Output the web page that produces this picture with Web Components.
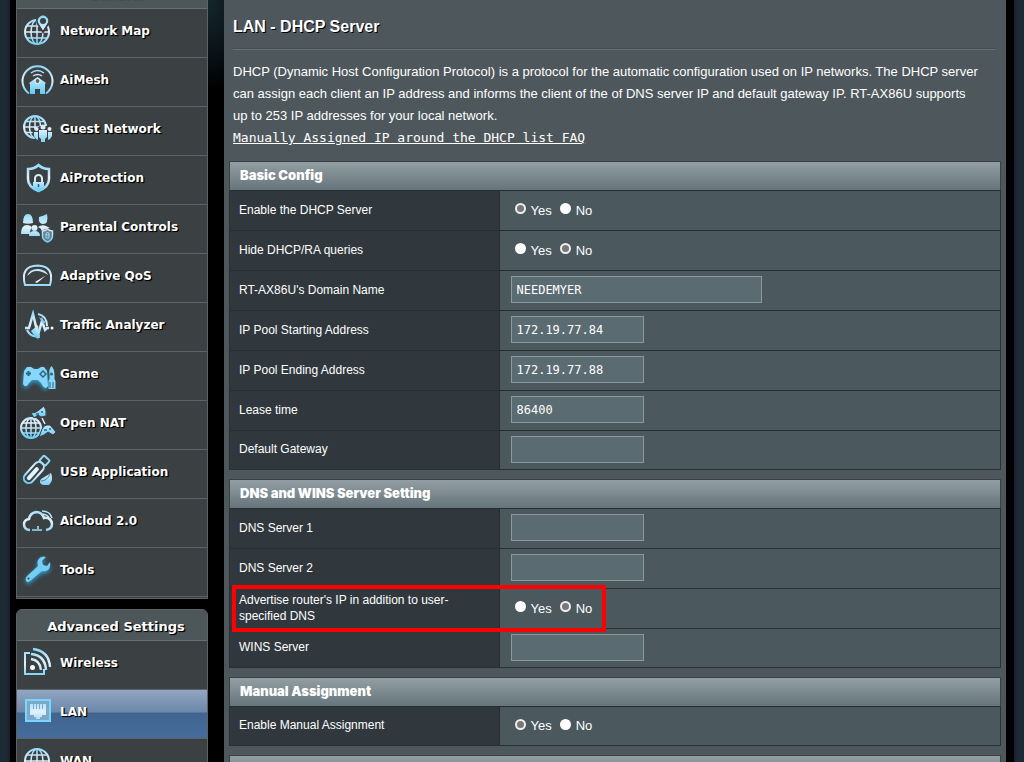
<!DOCTYPE html>
<html lang="en">
<head>
<meta charset="utf-8">
<title>LAN - DHCP Server</title>
<style>
html, body { margin: 0; height: 100%; overflow: hidden; }
body { background: #1d2a35; font-family: "Liberation Sans", Arial, sans-serif; color: #fff; }
</style>
</head>
<body>
<router-shell>
  <side-nav slot="nav">
    <nav-group heading="General">
      <nav-item icon="map">Network Map</nav-item>
      <nav-item icon="mesh">AiMesh</nav-item>
      <nav-item icon="guest">Guest Network</nav-item>
      <nav-item icon="shield">AiProtection</nav-item>
      <nav-item icon="parental">Parental Controls</nav-item>
      <nav-item icon="qos">Adaptive QoS</nav-item>
      <nav-item icon="traffic">Traffic Analyzer</nav-item>
      <nav-item icon="game">Game</nav-item>
      <nav-item icon="nat">Open NAT</nav-item>
      <nav-item icon="usb">USB Application</nav-item>
      <nav-item icon="cloud">AiCloud 2.0</nav-item>
      <nav-item icon="tools">Tools</nav-item>
    </nav-group>
    <nav-group heading="Advanced Settings">
      <nav-item icon="wireless">Wireless</nav-item>
      <nav-item icon="lan" active>LAN</nav-item>
      <nav-item icon="wan">WAN</nav-item>
    </nav-group>
  </side-nav>
  <page-intro heading="LAN - DHCP Server">
    DHCP (Dynamic Host Configuration Protocol) is a protocol for the automatic configuration used on IP networks. The DHCP server can assign each client an IP address and informs the client of the of DNS server IP and default gateway IP. RT-AX86U supports up to 253 IP addresses for your local network.
  </page-intro>
  <config-section data-key="basic"></config-section>
  <config-section data-key="dns"></config-section>
  <config-section data-key="manual"></config-section>
  <config-section data-key="list"></config-section>
</router-shell>

<script>
const attach = (el, html) => { el.attachShadow({ mode: "open" }).innerHTML = html; };

const SECTIONS = {
  basic: { title: "Basic Config", rows: [
    { label: "Enable the DHCP Server", radio: "Yes" },
    { label: "Hide DHCP/RA queries", radio: "No" },
    { label: "RT-AX86U's Domain Name", value: "NEEDEMYER", wide: true },
    { label: "IP Pool Starting Address", value: "172.19.77.84" },
    { label: "IP Pool Ending Address", value: "172.19.77.88" },
    { label: "Lease time", value: "86400" },
    { label: "Default Gateway", value: "" } ] },
  dns: { title: "DNS and WINS Server Setting", rows: [
    { label: "DNS Server 1", value: "" },
    { label: "DNS Server 2", value: "" },
    { label: "Advertise router's IP in addition to user-specified DNS", radio: "No", marked: true },
    { label: "WINS Server", value: "" } ] },
  manual: { title: "Manual Assignment", rows: [
    { label: "Enable Manual Assignment", radio: "Yes" } ] },
  list: { title: "", rows: [] }
};

const globe = (x, y, r) => {
  const h = r * 0.5, w = r * 0.87;
  return `<g stroke-width="1.5"><circle cx="${x}" cy="${y}" r="${r}" stroke-width="2"/>
  <ellipse cx="${x}" cy="${y}" rx="${h}" ry="${r}"/>
  <path d="M${x} ${y - r}V${y + r}M${x - r} ${y}H${x + r}M${x - w} ${y - h}H${x + w}M${x - w} ${y + h}H${x + w}"/></g>`;
};

const BG = "#3b4042";
const ICONS = {
  map: globe(18, 19, 12) + `<path d="M24 19L19 11a6 6 0 1 1 10 0z" fill="url(#g)" stroke="${BG}" stroke-width="2"/><path d="M24 17l-4-6a5 5 0 1 1 8 0z" fill="url(#g)" stroke="none"/><circle cx="24" cy="8" r="3" fill="${BG}" stroke="none"/>`,
  mesh: `<path d="M10 31.500a15 15 0 1 1 17 0" stroke-width="2"/><path d="M11 32V22l-1-1 8.500-6 8.500 6-1 1v10h-5v-5h-5v5z" fill="url(#b)" stroke="none"/><circle cx="18.500" cy="19" r="2.500" fill="#56636a" stroke="#fff" stroke-width="1"/><path d="M12 11q6.500-5 13 0M14 14q4.500-3 9 0" stroke-width="1.500"/>`,
  guest: globe(16, 16, 11) + `<path d="M13 20l8-5h8l6 3v12H17z" fill="${BG}" stroke="none"/><g fill="url(#g)" stroke="none"><circle cx="17.500" cy="18" r="2"/><path d="M15 21h4v8l-2-1-2-3z"/><circle cx="30.500" cy="18" r="2"/><path d="M29 21h4v4l-2 3-2 1z"/><circle cx="24" cy="16" r="2.500"/><path d="M20 19h8v7l-2 2v3h-4v-3l-2-2z"/></g>`,
  shield: `<path d="M19.500 5q4 4 10.500 4v10q0 8-10.500 12Q9 27 9 19V9q6.500 0 10.500-4z" stroke-width="2.500"/><path d="M16 22v-3.500a3.500 3.500 0 0 1 7 0V22"/><path d="M14 22h11v6l-5.500 2.500L14 28z" fill="url(#b)" stroke="none"/><path d="M19.500 24v3" stroke="#456" stroke-width="1.500"/>`,
  parental: `<g fill="url(#g)" stroke="none"><path d="M4 14q0-9 5-9t5 9q-5 1.500-10 0z"/><path d="M2 25q0-9 6-9 4 0 5 3-2 1-2 6z"/><path d="M20 8q4-1 8-3 2 10-4 10-5 0-4-7z"/><path d="M19 18q4-3 8-1l4 2q-6 1-8 3-1-3-4-4z"/><circle cx="15.500" cy="19" r="3"/><path d="M10 27q0-5 5.500-5t5.500 5z"/></g><path d="M28.500 20q2 2 5 2v5q0 4-5 6-5-2-5-6v-5q3 0 5-2z" fill="#64808c" stroke-width="1.500"/><path d="M27 26v-1a1.500 1.500 0 0 1 3 0v1M27 26h3v3h-3z" stroke-width="1"/>`,
  qos: `<path d="M6 27q-5-19 12.500-19.500Q36 8 31 27z" stroke-width="2"/><path d="M8 18q3-8 12-7 7 1 9 6-9-6-16-3z" fill="url(#g)" stroke="none"/><path d="M16 24l11-6.500-9 7.500z" fill="#fff" stroke="none"/>`,
  traffic: `<path d="M19 7q9 2 9 12M8 23q4 8 13 6" stroke-width="2"/><path d="M12 24l5 7h4l-2-13z" fill="url(#b)" stroke="none"/><path d="M6 21h4L14 7l5 21 4-14 3 9 2-2h2" stroke-width="2.500"/><path d="M20 10l7 5-3 2z" fill="#7cd0f2" stroke="none"/><circle cx="33" cy="21" r="1.500" fill="#fff" stroke="none"/>`,
  game: `<path d="M8 11h4l3 2h4l3-2h3l3 4 1 15q-3 5-7-3l-3-3h-6l-3 3q-3 6-6 1l1-13z" fill="#85d8fb" stroke="none" class="glow"/><path d="M9.500 15v5M7 17.500h5" stroke="#35617e"/><path d="M24 15l3 3-3 3-3-3z" stroke="#35617e" stroke-width="1.500"/><path d="M32.500 10q3 3 3 9v4l1 2v8h-7v-8l1-2v-4q-1-6 2-9z" fill="#85d8fb" stroke="none"/><circle cx="32.500" cy="18" r="1.500" fill="#35617e" stroke="none"/><path d="M31 26v6M34 26v6" stroke="#35617e" stroke-width="1"/>`,
  nat: globe(12, 23, 10) + `<g fill="url(#b)" stroke="${BG}" stroke-width="1"><path d="M12 8q5 0 8-3l5-4q3 5 2 10l-5 1-3-2-4 3z"/><path d="M20 32l3-8q2-4 5-4h3l6 7-3 3-5-3-4 3z"/></g><path d="M23 13l3 6" stroke-width="1.500"/><path d="M17 9h3M22 7h2M25 25h3M30 24h2" stroke="#35617e" stroke-width="1.500"/>`,
  usb: `<g transform="rotate(42 18 18)"><rect x="11" y="8" width="10" height="25" rx="5"/><rect x="14" y="14" width="4" height="16" rx="2" fill="#dff5ff" stroke="none"/><rect x="12" y="1" width="8" height="7" rx="1"/></g><path d="M22 25l10-6q3 7-2 12h-6q-5-2-2-6z" fill="url(#g)" stroke="none"/><path d="M22 27q6 0 9-7" stroke="#5e7d8f" stroke-width="1"/>`,
  cloud: `<path d="M11 27q-6 0-6-6 0-4 5-5 1-6 7-7 6 0 8 6 7-1 8 6 0 5-6 6" stroke-width="2.500"/><path d="M13 27h10M19 23v3" stroke-width="1.500"/><path d="M23 8q8 0 10 7M24 11q5 1 6 4" stroke-width="1.500"/>`,
  tools: `<path class="glow" d="M8 24L19 14q-2-6 3-9 3-1 5 0l-4 4 1 4 4 1 3-4q1 5-2 8-3 2-6 1L11 29q-2 2-4 0-1-3 1-5z" fill="#75cdf6" stroke="none"/><circle cx="9.500" cy="26.500" r="1" fill="${BG}" stroke="none"/>`,
  wireless: `<path d="M11 8H6v21h19v-5" stroke-width="2"/><circle cx="13.500" cy="22.500" r="2.500" fill="#fff" stroke="none"/><path d="M12 14q9 1 10 11M12 9q14 1 15 16M14 4q16 2 17 18" stroke-width="2.500"/>`,
  lan: `<rect x="7" y="6" width="24" height="21" stroke-width="2" stroke="#79d7fc" fill="#7ba9c9"/><path d="M11 10h3v5h1v-5h2v5h1v-5h2v5h1v-5h2v5h1v-5h3v11h-4v2h-2v2h-4v-2h-2v-2h-4z" fill="url(#g)" stroke="none"/>`,
  wan: globe(18, 18, 12)
};

customElements.define("line-icon", class extends HTMLElement {
  connectedCallback() {
    attach(this, `<style>
      :host { display: block; width: 36px; height: 36px; flex: none; }
      svg { display: block; overflow: visible; }
      .glow { filter: drop-shadow(0 2px 2px #2f9fd6); }
    </style>
    <svg width="36" height="36" viewBox="0 0 36 36" fill="none" stroke="url(#g)" stroke-width="2" aria-hidden="true">
      <defs>
        <linearGradient id="g" gradientUnits="userSpaceOnUse" x1="0" y1="4" x2="0" y2="32">
          <stop offset="0" stop-color="#8ed8f8"/><stop offset=".5" stop-color="#e4f1fa"/><stop offset="1" stop-color="#71cef6"/>
        </linearGradient>
        <linearGradient id="b" x1="0" y1="0" x2="0" y2="1">
          <stop offset="0" stop-color="#c5eafa"/><stop offset="1" stop-color="#61cbfa"/>
        </linearGradient>
      </defs>${ICONS[this.getAttribute("name")]}
    </svg>`);
  }
});

customElements.define("nav-item", class extends HTMLElement {
  connectedCallback() {
    attach(this, `<style>
      :host { display: block; border-bottom: 1px solid #5c6265; background: #3b4042; }
      :host([active]) { background: linear-gradient(#91a6c0, #6c87aa 46%, #41658f 48%, #456c9d); }
      a { display: flex; align-items: center; gap: 5px; height: 44px; padding: 0 0 4px 2px;
        color: #fff; text-decoration: none; font: bold 12px/20px "DejaVu Sans", Verdana, sans-serif;
        text-shadow: 1px 1px 1px #000, 1px 1px 0 #000; white-space: nowrap; }
    </style>
    <a href="#"><line-icon name="${this.getAttribute("icon")}"></line-icon><span><slot></slot></span></a>`);
  }
});

customElements.define("nav-group", class extends HTMLElement {
  connectedCallback() {
    attach(this, `<style>
      :host { display: block; border: 1px solid #5c6265; border-radius: 6px 6px 0 0; overflow: hidden; background: #3b4042; padding-bottom: 1px; }
      h2 { margin: 0; height: 30px; border-bottom: 1px solid #686e71; background: #4d5659; text-align: center;
        padding-left: 8px; font: bold 13px/34px "DejaVu Sans", Verdana, sans-serif; text-shadow: 1px 1px 1px #000, 1px 1px 0 #000; }
    </style><h2>${this.getAttribute("heading")}</h2><slot></slot>`);
  }
});

customElements.define("side-nav", class extends HTMLElement {
  connectedCallback() {
    attach(this, `<style>
      :host { display: block; }
      nav { display: flex; flex-direction: column; gap: 10px; margin-top: -23px; }
    </style><nav aria-label="Main"><slot></slot></nav>`);
  }
});

customElements.define("router-shell", class extends HTMLElement {
  connectedCallback() {
    attach(this, `<style>
      :host { display: flex; gap: 16px; box-sizing: border-box; min-height: 100vh; margin: 0 10px; padding: 0 8px 0 6px;
        background: radial-gradient(ellipse 60px 90px at 196px 0, #14282f, #0a1216 60%, #000) #000;
        box-shadow: 0 0 3px #0a0f13; }
      aside { flex: 0 0 192px; }
      main { flex: 1; min-width: 0; background: #4e575c; padding: 0 5px; display: flex; flex-direction: column; gap: 9px; }
    </style>
    <aside><slot name="nav"></slot></aside><main><slot></slot></main>`);
  }
});

customElements.define("page-intro", class extends HTMLElement {
  connectedCallback() {
    attach(this, `<style>
      :host { display: block; padding: 16px 0 3px 4px; }
      h1 { margin: 0; font: bold 16px/22px "Liberation Sans", Arial, sans-serif; text-shadow: 1px 1px 0 #000; }
      hr { margin: 10px 6px 11px 0; border: 0; height: 1px; background: #5f7179; border-top: 1px solid #444e53; }
      p { margin: 0; padding-right: 22px; font-size: 13px; line-height: 22px; }
      a { display: block; width: max-content; color: #fff; font: 13px/22px "DejaVu Sans Mono", "Lucida Console", monospace; }
    </style>
    <h1>${this.getAttribute("heading")}</h1><hr>
    <p><slot></slot></p>
    <a href="#">Manually Assigned IP around the DHCP list FAQ</a>`);
  }
});

customElements.define("config-section", class extends HTMLElement {
  connectedCallback() {
    const key = this.dataset.key, { title, rows } = SECTIONS[key];
    const field = (r, id) => r.radio
      ? `<div class="radios" role="radiogroup" aria-label="${r.label}">${["Yes", "No"].map(v =>
          `<label><input type="radio" name="${id}" value="${v}"${v === r.radio ? " checked" : ""}>${v}</label>`).join("")}</div>`
      : `<input type="text" id="${id}" value="${r.value}"${r.wide ? ' class="wide"' : ""}>`;
    attach(this, `<style>
      :host { display: block; }
      table { width: 100%; border-collapse: separate; border-spacing: 0; border: solid #2a3033; border-width: 0 1px 1px; table-layout: fixed; }
      caption { box-sizing: border-box; height: 29px; padding-left: 10px; text-align: left; border: 1px solid #394145; border-bottom: 0;
        background: linear-gradient(#929ea4, #66757b); font: 900 13px/27px Inter, "Arial Black", sans-serif; }
      th, td { box-sizing: border-box; height: 40px; padding: 0; border-top: 1px solid #272e32; }
      tr:last-child > * { height: 39px; }
      th { position: relative; width: 35%; background: #30383d; border-right: 1px solid #272e32; padding: 0 30px 2px 9px;
        text-align: left; font-weight: normal; font-size: 12px; line-height: 16px; }
      td { background: #4b595e; padding-left: 11px; }
      input[type=text] { box-sizing: border-box; display: block; width: 133px; height: 27px; margin: 0 0 2px; padding: 0 5px; color: #fff;
        background: #5b6b72; border: 1px solid #8b989d; border-radius: 0; font: 12px "DejaVu Sans Mono", Consolas, monospace; }
      input.wide { width: 251px; max-width: 95%; }
      .radios { display: flex; gap: 8px; padding-left: 4px; font-size: 13px; line-height: 16px; }
      .radios label { display: flex; align-items: center; gap: 5px; }
      input[type=radio] { appearance: none; box-sizing: border-box; width: 11px; height: 11px; margin: 0 0 4px; border-radius: 50%; background: #fff; }
      input[type=radio]:checked { background: #777; border: 2px solid #eee; }
      .mark { position: absolute; top: -4px; left: 2px; box-sizing: border-box; width: calc(100% + 105px); height: 47px;
        border: 4px solid #f00; border-radius: 1px; pointer-events: none; z-index: 1; }
    </style>
    <table><caption>${title}</caption><tbody>${rows.map((r, i) => {
      const id = `${key}-${i}`;
      return `<tr><th scope="row">${r.radio ? r.label : `<label for="${id}">${r.label}</label>`}${r.marked ? '<span class="mark"></span>' : ""}</th><td>${field(r, id)}</td></tr>`;
    }).join("")}</tbody></table>`);
  }
});
</script>
</body>
</html>
